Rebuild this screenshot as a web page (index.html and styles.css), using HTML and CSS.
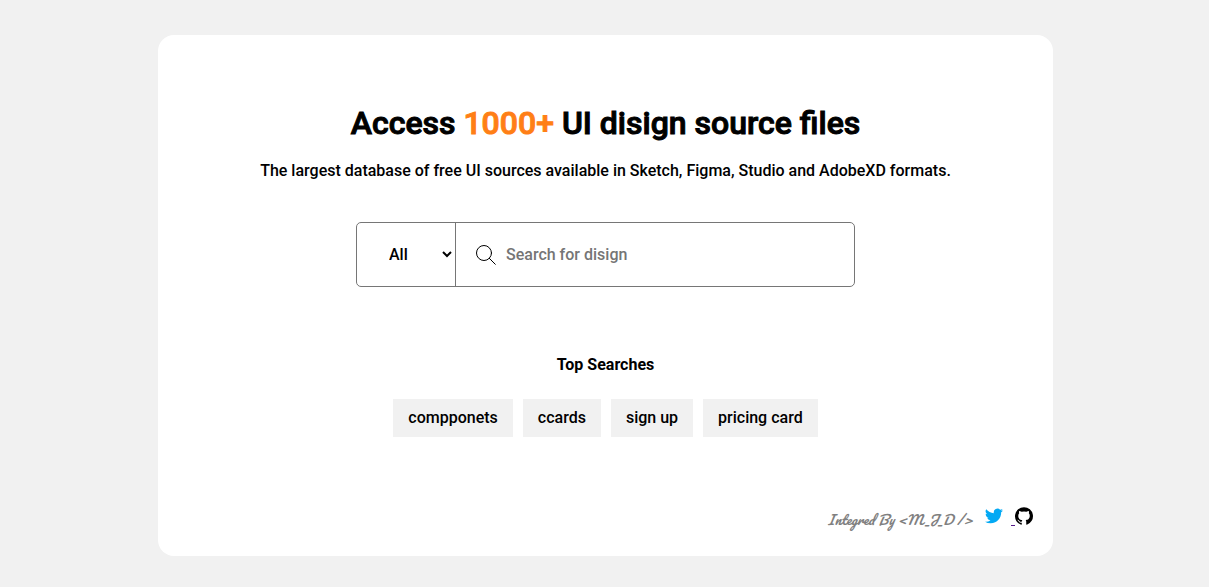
FILE: index.html
```html
<!DOCTYPE html>
<html lang="en">
<head>
<meta charset="utf-8">
<title>UI source files</title>
<link rel="stylesheet" href="styles.css">
</head>
<body>
<main class="card">
  <h1 class="title">Access <span class="accent">1000+</span> UI disign source files</h1>
  <p class="lead">The largest database of free UI sources available in Sketch, Figma, Studio and AdobeXD formats.</p>
  <form class="search">
    <select class="search-type" aria-label="Category"><option>All</option></select>
    <label class="search-field">
      <svg class="search-icon" viewBox="0 0 20 20" aria-hidden="true"><circle cx="8" cy="8" r="7.5"/><path d="M13.3 13.3 19.3 19.3"/></svg>
      <input class="search-input" type="text" placeholder="Search for disign" aria-label="Search">
    </label>
  </form>
  <h2 class="subtitle">Top Searches</h2>
  <nav class="tags">
    <a class="tag" href="#">compponets</a>
    <a class="tag" href="#">ccards</a>
    <a class="tag" href="#">sign up</a>
    <a class="tag" href="#">pricing card</a>
  </nav>
  <footer class="credit">
    <span class="credit-text">Integred By &lt;M_J_D /&gt;</span>
    <a class="social twitter" href="#" aria-label="Twitter"><svg viewBox="0 0 24 24" aria-hidden="true"><path d="M23.95 4.57a10 10 0 0 1-2.82.77 4.96 4.96 0 0 0 2.16-2.72c-.95.55-2 .95-3.13 1.18a4.92 4.92 0 0 0-8.38 4.48A13.93 13.93 0 0 1 1.64 3.16a4.92 4.92 0 0 0 1.52 6.57 4.9 4.9 0 0 1-2.23-.61v.06a4.92 4.92 0 0 0 3.95 4.83 4.9 4.9 0 0 1-2.21.08 4.94 4.94 0 0 0 4.6 3.42A9.87 9.87 0 0 1 0 19.54a13.94 13.94 0 0 0 7.55 2.21c9.05 0 14-7.5 14-13.98 0-.21 0-.42-.02-.63a9.94 9.94 0 0 0 2.42-2.57z"/></svg></a>
    <a class="social github" href="#" aria-label="GitHub"><span class="dash"></span><svg viewBox="0 0 24 24" aria-hidden="true"><path d="M12 .3a12 12 0 0 0-3.8 23.38c.6.12.83-.26.83-.57v-2.23c-3.34.73-4.04-1.42-4.04-1.42-.55-1.39-1.34-1.76-1.34-1.76-1.09-.74.08-.73.08-.73 1.21.09 1.84 1.24 1.84 1.24 1.07 1.83 2.81 1.3 3.49 1 .11-.78.42-1.31.76-1.61-2.66-.3-5.47-1.33-5.47-5.93 0-1.31.47-2.38 1.24-3.22-.13-.3-.54-1.52.11-3.18 0 0 1.01-.32 3.3 1.23a11.5 11.5 0 0 1 6.02 0c2.28-1.55 3.29-1.23 3.29-1.23.65 1.66.24 2.88.12 3.18a4.65 4.65 0 0 1 1.23 3.22c0 4.61-2.81 5.63-5.48 5.92.43.37.82 1.1.82 2.22v3.29c0 .32.21.69.82.57A12 12 0 0 0 12 .3"/></svg></a>
  </footer>
</main>
</body>
</html>
```
FILE: styles.css
```css
* { box-sizing: border-box; margin: 0; }
body {
  min-height: 100vh;
  display: flex;
  align-items: center;
  justify-content: center;
  padding: 20px 0 16px 2px;
  background: #f1f1f1;
  color: #000;
  font: 500 16px/20px Roboto, sans-serif;
}
.card {
  display: flex;
  flex-direction: column;
  align-items: center;
  width: 74vw;
  padding: 68px 20px 20px;
  border-radius: 16px;
  background: #fff;
}
.title { font-size: 32px; line-height: 40px; font-weight: 500; -webkit-text-stroke: 1px currentColor; }
.accent { color: #ff7f16; }
.lead { margin-top: 18px; }
.search {
  display: flex;
  width: 499px;
  max-width: 100%;
  margin-top: 41px;
  height: 65px;
  border: 1px solid #767676;
  border-radius: 5px;
}
.search-type {
  width: 99px;
  padding-left: 28px;
  border: 0;
  border-right: 1px solid #767676;
  background: transparent;
  color: #000;
  font: inherit;
}
.search-field { display: flex; flex: 1; align-items: center; gap: 10px; padding: 0 20px; }
.search-icon { width: 20px; height: 20px; fill: none; stroke: #000; stroke-width: 1; stroke-linecap: round; }
.search-input { flex: 1; min-width: 0; padding: 0; border: 0; outline: 0; background: transparent; font: inherit; }
.search-input::placeholder { color: #757575; }
.subtitle { margin-top: 68px; font-size: 16px; line-height: 20px; font-weight: 700; }
.tags { display: flex; flex-wrap: wrap; justify-content: center; gap: 10px; margin-top: 24px; }
.tag { padding: 9px 15px; background: #f1f1f1; color: #000; text-decoration: none; }
.credit { display: flex; align-items: flex-start; align-self: flex-end; margin-top: 67px; }
.credit-text { margin-right: 12px; color: #808080; font: italic 400 13px/32px Pacifico, "Brush Script MT", "Liberation Serif", cursive; }
.social { display: flex; align-items: center; height: 24px; }
.social svg { width: 18px; height: 18px; }
.twitter { fill: #03a9f4; margin-right: 8px; }
.github { fill: #000; }
.dash { align-self: flex-end; width: 4px; height: 1px; margin-bottom: 2px; background: #551a8b; }
```
